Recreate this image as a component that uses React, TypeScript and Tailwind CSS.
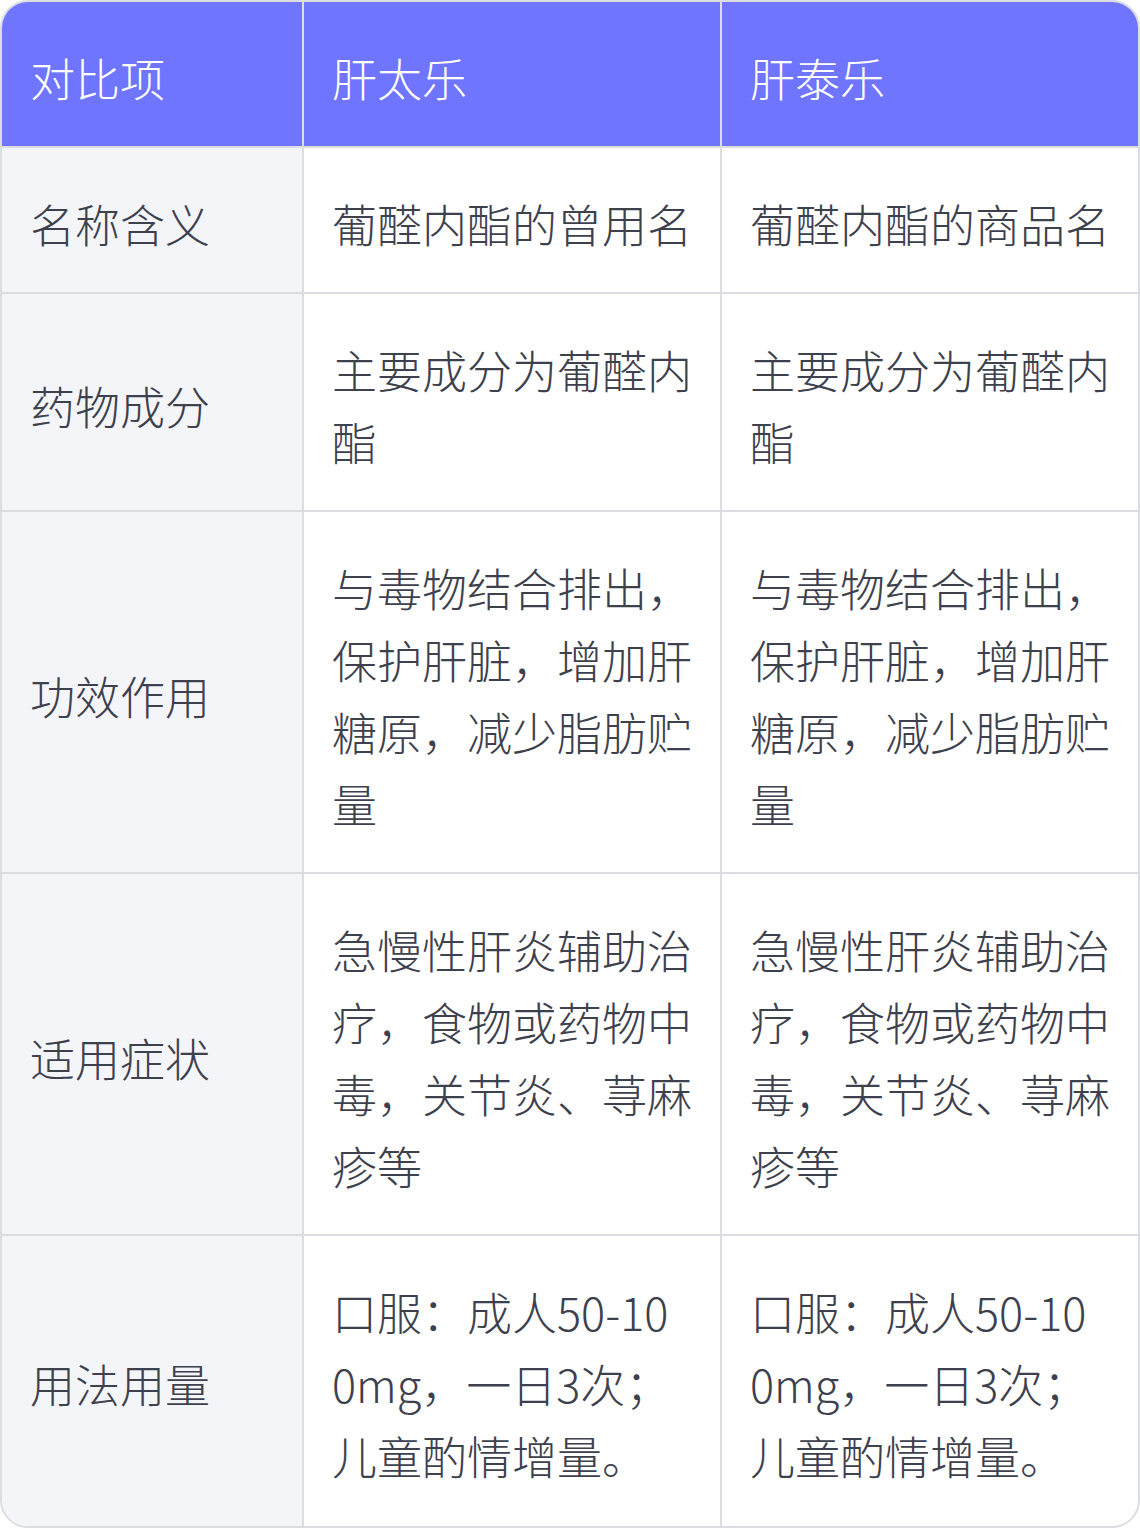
import React from "react";

const rows: [string, string, string][] = [
  ["名称含义", "葡醛内酯的曾用名", "葡醛内酯的商品名"],
  ["药物成分", "主要成分为葡醛内酯", "主要成分为葡醛内酯"],
  ["功效作用", "与毒物结合排出，保护肝脏，增加肝糖原，减少脂肪贮量", "与毒物结合排出，保护肝脏，增加肝糖原，减少脂肪贮量"],
  ["适用症状", "急慢性肝炎辅助治疗，食物或药物中毒，关节炎、荨麻疹等", "急慢性肝炎辅助治疗，食物或药物中毒，关节炎、荨麻疹等"],
  ["用法用量", "口服：成人50-100mg，一日3次；儿童酌情增量。", "口服：成人50-100mg，一日3次；儿童酌情增量。"],
];

export default function App() {
  return (
    <div
      className="w-[1140px] bg-white"
      style={{ fontFamily: '"Noto Sans CJK SC", "Noto Sans", sans-serif' }}
    >
      <div className="overflow-hidden rounded-[28px] border-2 border-[#dcdde3] text-[45px] font-light leading-[72px] text-[#3d404d]">
        <div className="grid grid-cols-[302px_418px_416px] bg-[#6f75ff] text-white">
          <div className="border-b-2 border-r-2 border-[#dcdde3] px-[28px] pb-[32px] pt-[40px]">对比项</div>
          <div className="border-b-2 border-r-2 border-[#dcdde3] px-[28px] pb-[32px] pt-[40px]">肝太乐</div>
          <div className="border-b-2 border-[#dcdde3] px-[28px] pb-[32px] pt-[40px]">肝泰乐</div>
        </div>
        {rows.map((r, i) => {
          const last = i === rows.length - 1;
          return (
            <div key={i} className="grid grid-cols-[302px_418px_416px]">
              <div
                className={`flex items-center border-r-2 border-[#dcdde3] bg-[#f4f5f9] px-[28px] pt-[40px] ${last ? "pb-[34px]" : "border-b-2 pb-[32px]"}`}
              >
                {r[0]}
              </div>
              <div
                className={`break-all border-r-2 border-[#dcdde3] px-[28px] pt-[40px] ${last ? "pb-[34px]" : "border-b-2 pb-[32px]"}`}
              >
                {r[1]}
              </div>
              <div
                className={`break-all border-[#dcdde3] px-[28px] pt-[40px] ${last ? "pb-[34px]" : "border-b-2 pb-[32px]"}`}
              >
                {r[2]}
              </div>
            </div>
          );
        })}
      </div>
    </div>
  );
}
